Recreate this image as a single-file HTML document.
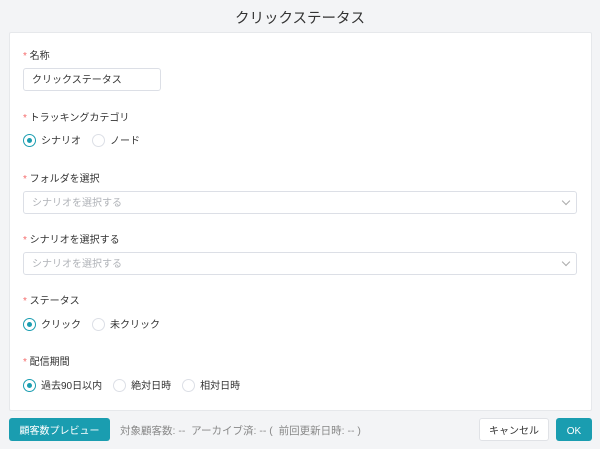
<!DOCTYPE html>
<html><head><meta charset="utf-8"><style>
*{box-sizing:border-box;margin:0;padding:0}
body{width:600px;height:449px;background:#f3f4f6;font-family:"Liberation Sans","Noto Sans CJK JP",sans-serif;color:#333;position:relative;overflow:hidden;font-size:10px;line-height:14px}
.title{position:absolute;top:9px;left:0;width:600px;text-align:center;font-size:14.5px;line-height:20px;color:#333}
.card{position:absolute;left:9px;top:32px;width:583px;height:379px;background:#fff;border:1px solid #e6e8eb;border-radius:2px}
.a{position:absolute}
.lbl{font-size:10px;color:#333}
.lbl:before{content:"* ";color:#f56c6c}
.inp{border:1px solid #dcdfe6;border-radius:3px;background:#fff;height:23px;padding-left:8px;padding-top:4px;line-height:16px;font-size:10px}
.ph{color:#b0b3b8}
.chev{position:absolute;right:7px;top:6px;width:6px;height:6px;border-right:1px solid #aaa;border-bottom:1px solid #aaa;transform:rotate(45deg)}
.rg{display:flex;align-items:center;height:14px}
.r{display:flex;align-items:center;margin-right:11px;font-size:10px;color:#333;height:14px}
.r span{position:relative;top:2px}
.r i{width:13px;height:13px;border:1px solid #dcdfe6;border-radius:50%;margin-right:5px;position:relative;background:#fff;flex:none}
.r i.on{border-color:#1a9db0}
.r i.on:after{content:"";position:absolute;left:3px;top:3px;width:5px;height:5px;border-radius:50%;background:#1a9db0}
.btn{position:absolute;top:418px;height:23px;border-radius:3px;font-size:10px;text-align:center;line-height:16px;padding-top:6px}
</style></head><body>
<div class="title">クリックステータス</div>
<div class="card"></div>
<div class="a lbl" style="left:23px;top:50px">名称</div>
<div class="a inp" style="left:23px;top:68px;width:138px">クリックステータス</div>
<div class="a lbl" style="left:23px;top:112px">トラッキングカテゴリ</div>
<div class="a rg" style="left:23px;top:133px"><span class="r"><i class="on"></i><span>シナリオ</span></span><span class="r"><i></i><span>ノード</span></span></div>
<div class="a lbl" style="left:23px;top:173px">フォルダを選択</div>
<div class="a inp ph" style="left:23px;top:191px;width:554px">シナリオを選択する<span class="chev"></span></div>
<div class="a lbl" style="left:23px;top:234px">シナリオを選択する</div>
<div class="a inp ph" style="left:23px;top:252px;width:554px">シナリオを選択する<span class="chev"></span></div>
<div class="a lbl" style="left:23px;top:295px">ステータス</div>
<div class="a rg" style="left:23px;top:317px"><span class="r"><i class="on"></i><span>クリック</span></span><span class="r"><i></i><span>未クリック</span></span></div>
<div class="a lbl" style="left:23px;top:356px">配信期間</div>
<div class="a rg" style="left:23px;top:378px"><span class="r"><i class="on"></i><span>過去90日以内</span></span><span class="r"><i></i><span>絶対日時</span></span><span class="r"><i></i><span>相対日時</span></span></div>
<div class="btn" style="left:9px;width:101px;background:#1a9db0;color:#fff">顧客数プレビュー</div>
<div class="a" style="left:120px;top:424px;color:#888;font-size:10.5px">対象顧客数: -- &nbsp;アーカイブ済: -- ( &nbsp;前回更新日時: -- )</div>
<div class="btn" style="left:479px;width:70px;background:#fff;border:1px solid #e0e2e6;color:#333;padding-top:5px">キャンセル</div>
<div class="btn" style="left:556px;width:36px;background:#1a9db0;color:#fff">OK</div>
</body></html>
